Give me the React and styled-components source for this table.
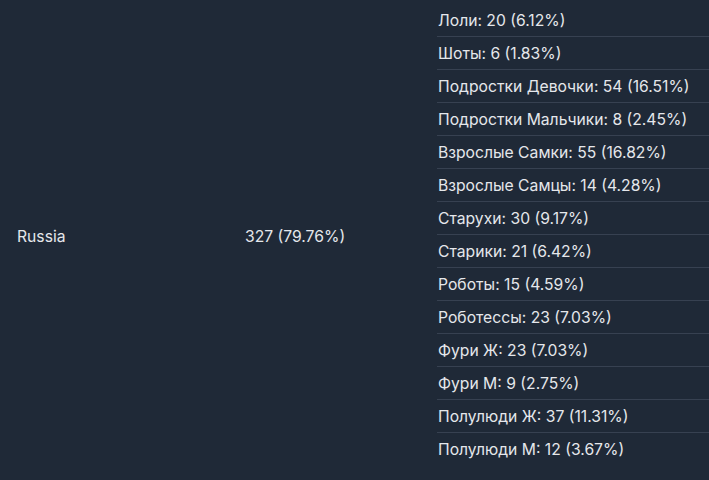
import React from "react";
import styled, { createGlobalStyle } from "styled-components";

const Global = createGlobalStyle`
  html, body { margin: 0; padding: 0; background: #1f2937; }
  body { font-family: Inter, "Noto Sans", sans-serif; color: #e5e7eb; }
`;

const Row = styled.div`
  display: grid;
  grid-template-columns: 228px 192px 1fr;
  align-items: center;
  padding: 4px 0 11px 17px;
  font-size: 15.7px;
`;

const Cell = styled.div`
  line-height: 20px;
  padding-top: 3px;
`;

const List = styled.ul`
  list-style: none;
  margin: 0;
  padding: 0;
`;

const Item = styled.li`
  line-height: 20px;
  padding: 7px 0 5px 1px;
  border-bottom: 1px solid ${(p) => (p.$last ? "transparent" : "#374151")};
`;

const items = [
  "Лоли: 20 (6.12%)",
  "Шоты: 6 (1.83%)",
  "Подростки Девочки: 54 (16.51%)",
  "Подростки Мальчики: 8 (2.45%)",
  "Взрослые Самки: 55 (16.82%)",
  "Взрослые Самцы: 14 (4.28%)",
  "Старухи: 30 (9.17%)",
  "Старики: 21 (6.42%)",
  "Роботы: 15 (4.59%)",
  "Роботессы: 23 (7.03%)",
  "Фури Ж: 23 (7.03%)",
  "Фури М: 9 (2.75%)",
  "Полулюди Ж: 37 (11.31%)",
  "Полулюди М: 12 (3.67%)",
];

export default function App() {
  return (
    <>
      <Global />
      <Row>
        <Cell>Russia</Cell>
        <Cell>327 (79.76%)</Cell>
        <List>
          {items.map((t, i) => (
            <Item key={t} $last={i === items.length - 1}>
              {t}
            </Item>
          ))}
        </List>
      </Row>
    </>
  );
}
